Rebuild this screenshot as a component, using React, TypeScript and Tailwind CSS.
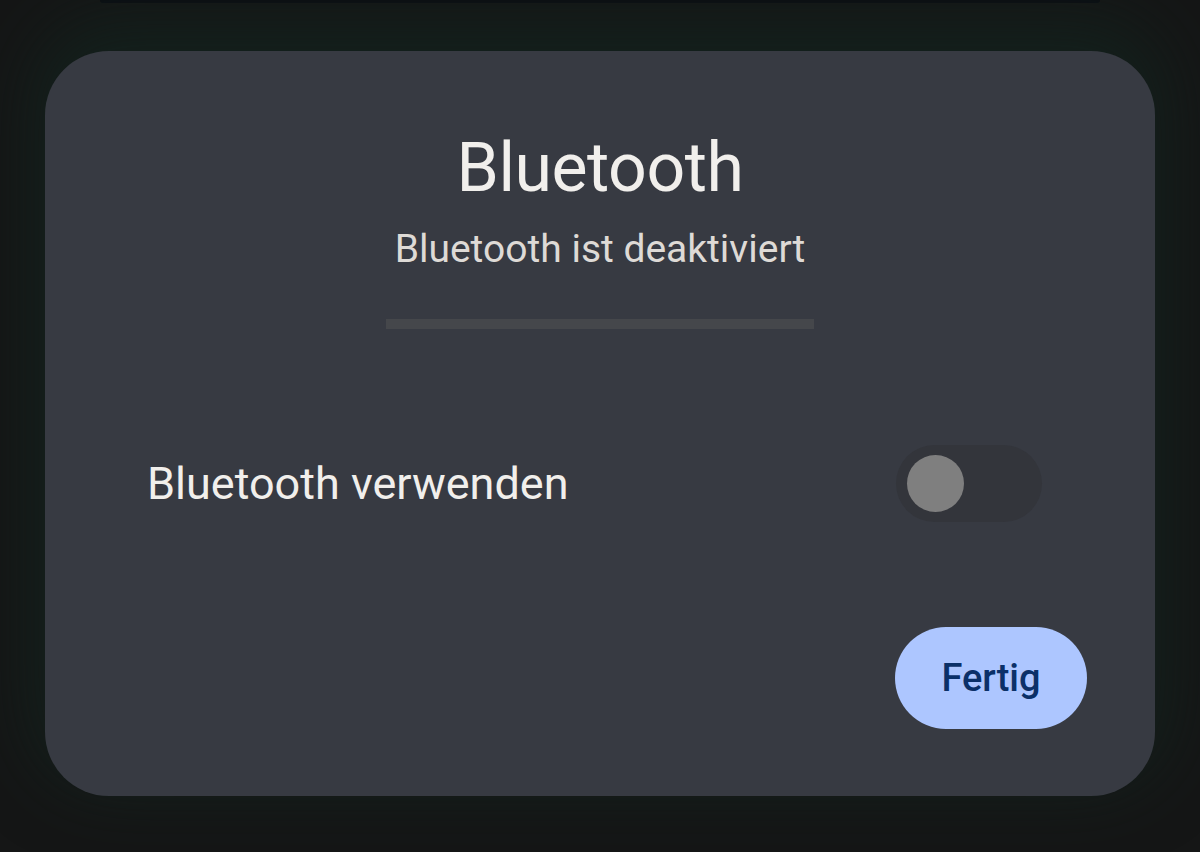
import { useState } from 'react'

const Toggle = ({ on, onChange }: { on: boolean; onChange: (v: boolean) => void }) => {
  return (
    <button
      onClick={() => onChange(!on)}
      className={
        'relative w-[146px] h-[77px] rounded-full transition-colors ' +
        (on ? 'bg-[#adc6ff]' : 'bg-[#33353b]')
      }
    >
      <span
        className={
          'absolute top-[10px] w-[57px] h-[57px] rounded-full transition-all ' +
          (on ? 'left-[78px] bg-[#0b3068]' : 'left-[11px] bg-[#7f7f7f]')
        }
      />
    </button>
  )
}

const App = () => {
  const [enabled, setEnabled] = useState(false)

  return (
    <div className="w-[1200px] h-[852px] overflow-hidden bg-[#151616] font-['Roboto',sans-serif]">
      <div className="h-[3px] mx-[100px] rounded-b-[12px] bg-[#0b0d12]" />
      <div className="pt-[48px] px-[45px]">
        <div className="flex flex-col items-center rounded-[64px] bg-[#373a42] pt-[77px] pb-[67px] shadow-[0_-20px_70px_10px_rgba(18,40,34,0.6)]">
          <h1 className="text-[68px] leading-[80px] tracking-[-0.5px] text-[#f1efec]">Bluetooth</h1>
          <p className="mt-[17px] text-[39px] leading-[48px] text-[#dedad6]">
            {enabled ? 'Bluetooth ist aktiviert' : 'Bluetooth ist deaktiviert'}
          </p>
          <div className="mt-[46px] w-[428px] h-[10px] bg-[#45474b]" />
          <div className="mt-[116px] w-full flex items-center justify-between pl-[102px] pr-[113px]">
            <span className="text-[45px] leading-[56px] text-[#f1efec]">Bluetooth verwenden</span>
            <Toggle on={enabled} onChange={setEnabled} />
          </div>
          <div className="mt-[105px] w-full flex justify-end pr-[68px]">
            <button className="w-[192px] h-[102px] rounded-full bg-[#adc6ff] text-[38px] font-medium text-[#0b3068]">
              Fertig
            </button>
          </div>
        </div>
      </div>
    </div>
  )
}

export default App
